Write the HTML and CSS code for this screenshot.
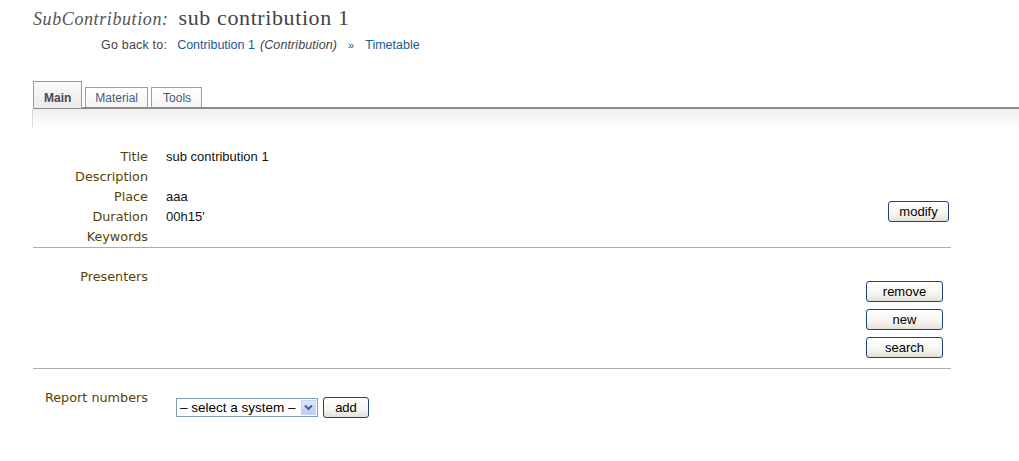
FILE: index.html
```html
<!DOCTYPE html>
<html>
<head>
<meta charset="utf-8">
<link rel="stylesheet" href="styles.css">
</head>
<body>
<div class="page">
  <h1 class="heading"><span class="kind">SubContribution:</span><span class="name">sub contribution 1</span></h1>
  <div class="backlinks">
    <span class="goback">Go back to:</span>
    <a class="link">Contribution 1</a>
    <span class="ctype">(Contribution)</span>
    <span class="sep">»</span>
    <a class="link">Timetable</a>
  </div>

  <div class="tabs">
    <div class="tab active">Main</div>
    <div class="tab">Material</div>
    <div class="tab tools">Tools</div>
  </div>
  <div class="tabshade"></div>

  <div class="section first">
    <div class="fields">
      <div class="label">Title</div><div class="value">sub contribution 1</div>
      <div class="label">Description</div><div class="value"></div>
      <div class="label">Place</div><div class="value">aaa</div>
      <div class="label">Duration</div><div class="value">00h15'</div>
      <div class="label">Keywords</div><div class="value"></div>
    </div>
    <div class="actions modify-col">
      <button class="btn wide-modify">modify</button>
    </div>
  </div>

  <div class="section second">
    <div class="fields">
      <div class="label">Presenters</div><div class="value"></div>
    </div>
    <div class="actions stack">
      <button class="btn wide">remove</button>
      <button class="btn wide">new</button>
      <button class="btn wide">search</button>
    </div>
  </div>

  <div class="section third">
    <div class="fields report-fields">
      <div class="label">Report numbers</div>
      <div class="value report">
        <div class="select">
          <span class="seltext">– select a system –</span>
          <span class="selarrow"><svg width="9" height="7" viewBox="0 0 9 7"><path d="M1 1.5 L4.5 5 L8 1.5" fill="none" stroke="#4d6185" stroke-width="2"/></svg></span>
        </div>
        <button class="btn add">add</button>
      </div>
    </div>
  </div>
</div>
</body>
</html>
```

FILE: styles.css
```css
html, body {
  margin: 0;
  padding: 0;
  background: #ffffff;
}

.page {
  padding: 5px 0 40px 33px;
  font-family: "Liberation Sans", Arial, sans-serif;
  color: #222;
}

.heading {
  margin: 0;
  font-weight: normal;
  display: flex;
  align-items: baseline;
  height: 27px;
}

.kind {
  font-family: "Liberation Serif", "Times New Roman", serif;
  font-style: italic;
  font-size: 18px;
  letter-spacing: 0.6px;
  color: #555;
}

.name {
  font-family: "Liberation Serif", "Times New Roman", serif;
  font-size: 22px;
  letter-spacing: 0.6px;
  color: #444;
  margin-left: 10px;
}

.backlinks {
  margin: 6px 0 0 68px;
  font-size: 12.5px;
  color: #444;
  display: flex;
  align-items: baseline;
  height: 14px;
}

.goback { margin-right: 10px; letter-spacing: 0.2px; }
.link { color: #1a5a96; text-decoration: none; }
.ctype { font-style: italic; color: #444; margin-left: 5px; letter-spacing: 0.1px; }
.sep { margin: 0 11px 0 11px; font-size: 11px; }

.tabs {
  margin-top: 29px;
  display: flex;
  align-items: flex-end;
  border-bottom: 2px solid #8c8c8c;
  height: 26px;
  gap: 3px;
}

.tab {
  height: 19px;
  padding: 0 9px;
  border: 1px solid #a0a0a0;
  border-bottom: none;
  background: linear-gradient(#ffffff, #f4f4f4);
  color: #3f5e7e;
  font-size: 12px;
  line-height: 20px;
  text-align: center;
}

.tab.tools { padding: 0 10px 0 11px; }

.tab.active {
  padding: 0 10px;
  font-weight: bold;
  color: #4a4a4a;
  background: linear-gradient(#f9f9f9, #ececec);
  border-color: #9a9a9a;
  line-height: 33px;
  margin-bottom: -1px;
  border-bottom: 1px solid #ececec;
  height: 25px;
}

.tabshade {
  height: 18px;
  border-left: 1px solid #d8d8d8;
  background: linear-gradient(#efefef, #ffffff);
  margin-left: -1px;
}

.section {
  width: 918px;
  display: flex;
  justify-content: space-between;
  border-bottom: 1px solid #acacac;
}

.section.first { padding-top: 21px; height: 99px; }
.section.second { padding-top: 20px; height: 100px; }
.section.third { border-bottom: none; padding-top: 20px; }

.fields {
  display: grid;
  grid-template-columns: 115px auto;
  column-gap: 18px;
  grid-auto-rows: 20px;
  align-content: start;
}

.fields.report-fields {
  grid-auto-rows: auto;
}

.label {
  text-align: right;
  font-family: "DejaVu Sans", Verdana, sans-serif;
  font-size: 12.8px;
  color: #5a4200;
  line-height: 17px;
}

.value {
  font-size: 13px;
  color: #111;
  line-height: 17px;
}

.actions {
  display: flex;
  flex-direction: column;
  gap: 7px;
}

.modify-col {
  padding-top: 53px;
  padding-right: 2px;
}

.stack {
  padding-top: 13px;
  padding-right: 8px;
}

.btn {
  font-family: "Liberation Sans", Arial, sans-serif;
  font-size: 13px;
  color: #000;
  height: 21px;
  padding: 0;
  border: 1px solid #1d4378;
  border-radius: 3px;
  background: linear-gradient(#ffffff 0%, #f6f5f0 60%, #e3e1d8 100%);
  line-height: 18px;
}

.wide-modify { width: 61px; }
.wide { width: 77px; }

.report {
  display: flex;
  align-items: flex-start;
  gap: 5px;
  padding-top: 9px;
  margin-left: 10px;
}

.select {
  width: 140px;
  height: 17px;
  border: 1px solid #7f9db9;
  display: flex;
  align-items: center;
  justify-content: space-between;
  font-size: 13.5px;
  background: #fff;
}

.seltext { padding-left: 3px; color: #000; white-space: nowrap; }

.selarrow {
  width: 15px;
  height: 15px;
  margin-right: 1px;
  background: linear-gradient(#dfe8fb, #b8cbf3);
  border: 1px solid #c3d3fd;
  box-sizing: border-box;
  display: flex;
  align-items: center;
  justify-content: center;
}

.btn.add {
  width: 46px;
  margin-top: -1px;
}
```
